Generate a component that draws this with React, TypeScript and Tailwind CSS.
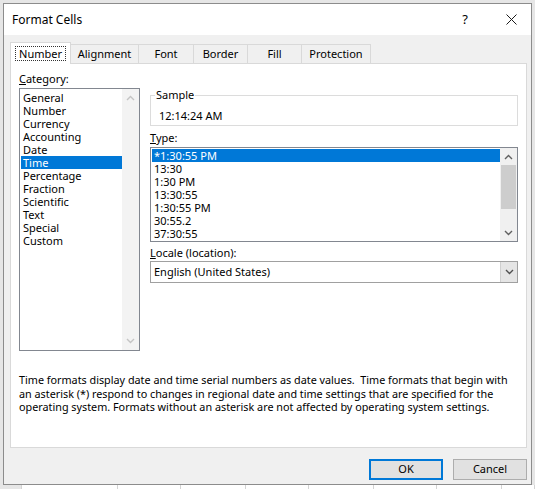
import React from "react";

const categories = [
  "General",
  "Number",
  "Currency",
  "Accounting",
  "Date",
  "Time",
  "Percentage",
  "Fraction",
  "Scientific",
  "Text",
  "Special",
  "Custom",
];

const types = ["*1:30:55 PM", "13:30", "1:30 PM", "13:30:55", "1:30:55 PM", "30:55.2", "37:30:55"];

const tabs = [
  { label: "Number", w: "w-[61px]" },
  { label: "Alignment", w: "w-[69px]" },
  { label: "Font", w: "w-[56px]" },
  { label: "Border", w: "w-[55px]" },
  { label: "Fill", w: "w-[55px]" },
  { label: "Protection", w: "w-[70px]" },
];

function Chevron({ dir, color = "#606060" }: { dir: "up" | "down"; color?: string }) {
  return (
    <svg width="9" height="6" viewBox="0 0 9 6">
      <path
        d={dir === "up" ? "M1 5 L4.5 1.5 L8 5" : "M1 1 L4.5 4.5 L8 1"}
        fill="none"
        stroke={color}
        strokeWidth="1.4"
      />
    </svg>
  );
}

function CategoryList() {
  return (
    <div className="flex h-[263px] w-[121px] border border-[#828790] bg-white">
      <div className="flex-1 pl-[1px] pt-[2px]">
        {categories.map((c) => (
          <div
            key={c}
            className={
              "h-[13px] pl-[2px] leading-[13px] " + (c === "Time" ? "bg-[#0078d7] text-white" : "text-black")
            }
          >
            {c}
          </div>
        ))}
      </div>
      <div className="flex w-[17px] flex-col justify-between bg-[#f3f3f3] py-[6px]">
        <div className="flex justify-center">
          <Chevron dir="up" color="#c4c4c4" />
        </div>
        <div className="flex justify-center">
          <Chevron dir="down" color="#c4c4c4" />
        </div>
      </div>
    </div>
  );
}

function TypeList() {
  return (
    <div className="flex h-[95px] border border-[#828790] bg-white">
      <div className="flex-1 pl-[1px] pt-[1px]">
        {types.map((t, i) => (
          <div
            key={t}
            className={"h-[13px] pl-[2px] leading-[13px] " + (i === 0 ? "bg-[#0078d7] text-white" : "text-black")}
          >
            {t}
          </div>
        ))}
      </div>
      <div className="flex w-[17px] flex-col bg-[#f0f0f0]">
        <div className="flex h-[17px] items-center justify-center">
          <Chevron dir="up" />
        </div>
        <div className="mx-[1px] h-[44px] bg-[#cdcdcd]" />
        <div className="flex-1" />
        <div className="flex h-[17px] items-center justify-center">
          <Chevron dir="down" />
        </div>
      </div>
    </div>
  );
}

export default function App() {
  return (
    <div className="flex h-[489px] w-[535px] flex-col overflow-hidden bg-[#e6e6e6] font-['Noto_Sans',sans-serif] text-[11px] text-black">
      <div className="pl-[3px] pt-[3px]">
        <div className="flex h-[482px] w-[529px] flex-col border border-[#8c8c8c] bg-[#f0f0f0]">
          {/* title bar */}
          <div className="flex h-[31px] items-center bg-white">
            <div className="flex-1 pl-[8px] text-[12px]">Format Cells</div>
            <div className="w-[52px] text-center text-[13px]">?</div>
            <div className="flex w-[40px] items-center justify-center">
              <svg width="11" height="11" viewBox="0 0 11 11">
                <path d="M0.5 0.5 L10.5 10.5 M10.5 0.5 L0.5 10.5" stroke="#1a1a1a" strokeWidth="1" />
              </svg>
            </div>
          </div>

          <div className="flex flex-col pl-[6px] pr-[4px] pt-[7px]">
            {/* tabs */}
            <div className="flex h-[21px] items-end">
              {tabs.map((t, i) =>
                i === 0 ? (
                  <div
                    key={t.label}
                    className={
                      t.w +
                      " relative z-10 -mb-px flex h-[22px] items-center justify-center border-l border-r border-t border-[#d9d9d9] bg-white"
                    }
                  >
                    <span className="border border-dotted border-[#333] px-[3px] leading-[13px]">{t.label}</span>
                  </div>
                ) : (
                  <div
                    key={t.label}
                    className={
                      t.w +
                      " -ml-px flex h-[19px] items-center justify-center border-l border-r border-t border-[#d9d9d9] bg-[#f0f0f0]"
                    }
                  >
                    {t.label}
                  </div>
                )
              )}
            </div>

            {/* panel */}
            <div className="h-[385px] border border-[#d9d9d9] bg-white px-[8px] pt-[8px]">
              <div className="flex">
                <div className="flex w-[121px] flex-col">
                  <div className="h-[16px] leading-[14px]">
                    <span className="underline">C</span>ategory:
                  </div>
                  <CategoryList />
                </div>

                <div className="ml-[10px] flex w-[368px] flex-col">
                  <div className="relative mt-[23px] h-[31px] border border-[#dcdcdc]">
                    <span className="absolute -top-[8px] left-[4px] bg-white px-[1px] leading-[14px]">Sample</span>
                    <div className="pl-[8px] pt-[13px] leading-[14px]">12:14:24 AM</div>
                  </div>

                  <div className="mt-[5px] h-[16px] leading-[14px]">
                    <span className="underline">T</span>ype:
                  </div>
                  <TypeList />

                  <div className="mt-[4px] h-[15px] leading-[14px]">
                    <span className="underline">L</span>ocale (location):
                  </div>
                  <div className="flex h-[22px] border border-[#a0a0a0] bg-white">
                    <div className="flex flex-1 items-center pl-[3px]">English (United States)</div>
                    <div className="flex w-[17px] items-center justify-center border-l border-[#cfcfcf] bg-[#e5e5e5]">
                      <Chevron dir="down" color="#505050" />
                    </div>
                  </div>
                </div>
              </div>

              <p className="mt-[22px] whitespace-nowrap text-[10.8px] leading-[13.5px]">
                Time formats display date and time serial numbers as date values.&nbsp; Time formats that begin with
                <br />
                an asterisk (*) respond to changes in regional date and time settings that are specified for the
                <br />
                operating system. Formats without an asterisk are not affected by operating system settings.
              </p>
            </div>

            {/* buttons */}
            <div className="mt-[11px] flex justify-end gap-[10px]">
              <button className="flex h-[21px] w-[74px] items-center justify-center border-2 border-[#0078d7] bg-[#e1e1e1]">
                OK
              </button>
              <button className="flex h-[21px] w-[74px] items-center justify-center border border-[#adadad] bg-[#e1e1e1]">
                Cancel
              </button>
            </div>
          </div>
        </div>
      </div>

      <div className="flex h-[4px] bg-white">
        <div className="w-[22px] border-r border-[#d4d4d4] bg-[#e6e6e6]" />
        {[96, 63, 65, 63, 65, 63, 65, 33].map((w, i) => (
          <div key={i} className="border-r border-[#d4d4d4]" style={{ width: w }} />
        ))}
      </div>
    </div>
  );
}
